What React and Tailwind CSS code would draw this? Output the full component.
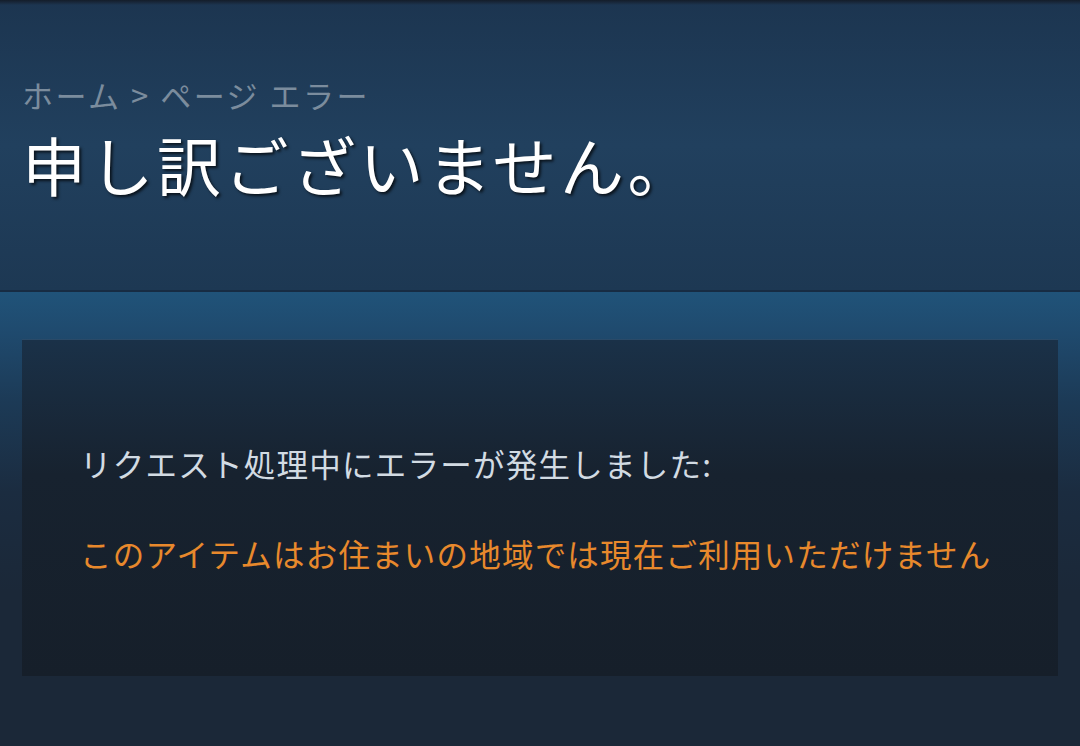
import React from 'react';

function Header() {
  return (
    <div className="relative h-[290px] bg-gradient-to-b from-[#1c3550] via-[#21405e] to-[#1d3853] px-[22px] pt-[76px]">
      <div className="absolute left-0 right-0 top-0 h-[5px] bg-gradient-to-b from-[#141d2a] to-[#1c3550]" />
      <div className="text-[31px] leading-[37px] tracking-[2.5px] text-[#7b8c9d]">
        ホーム &gt; ページ エラー
      </div>
      <h1 className="mt-[15px] text-[64px] leading-[70px] tracking-[3.5px] text-white [text-shadow:2px_2px_3px_rgba(0,0,0,0.7)]">
        申し訳ございません。
      </h1>
    </div>
  );
}

function ErrorBox() {
  return (
    <div className="mx-[22px] h-[337px] border-t border-[#2a4a68] bg-gradient-to-b from-[#1a3148] via-[#17222f] via-40% to-[#161f2a] px-[58px] pt-[103px]">
      <p className="text-[31.5px] leading-[40px] tracking-[1.25px] text-[#d2dbe3]">
        リクエスト処理中にエラーが発生しました:
      </p>
      <p className="mt-[50px] text-[31.5px] leading-[40px] tracking-[1.2px] text-[#e8892c]">
        このアイテムはお住まいの地域では現在ご利用いただけません
      </p>
    </div>
  );
}

export default function App() {
  return (
    <div
      className="h-[746px] w-[1080px] overflow-hidden bg-[#1b2838]"
      style={{ fontFamily: '"Noto Sans CJK JP", "Noto Sans", sans-serif' }}
    >
      <Header />
      <div className="h-[2px] bg-[#172c43]" />
      <div className="bg-[linear-gradient(to_bottom,#205379_0px,#1f4a6e_40px,#1c3a56_110px,#1b2c40_200px,#1b2838_300px)] pt-[47px]">
        <ErrorBox />
      </div>
    </div>
  );
}
